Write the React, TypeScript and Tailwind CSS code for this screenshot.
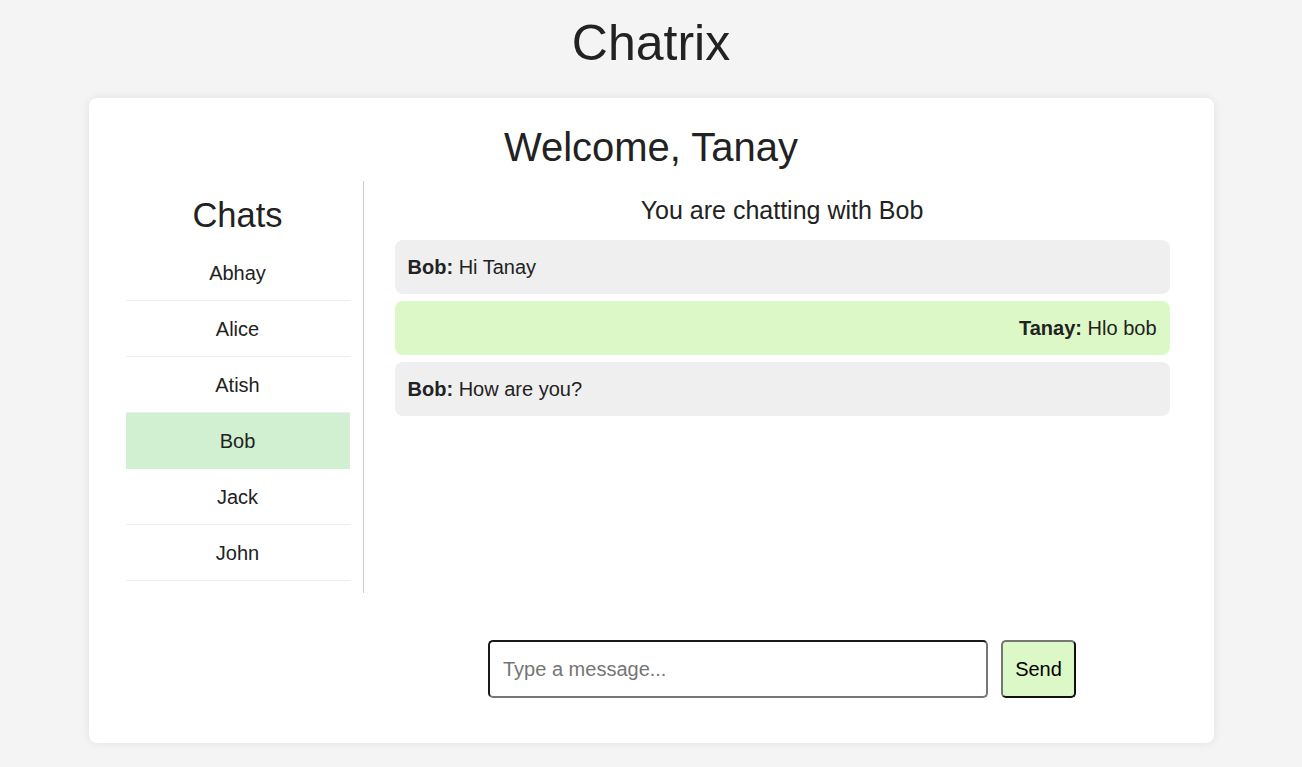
const chats = ["Abhay", "Alice", "Atish", "Bob", "Jack", "John"];

const messages = [
  { from: "Bob", text: "Hi Tanay", mine: false },
  { from: "Tanay", text: "Hlo bob", mine: true },
  { from: "Bob", text: "How are you?", mine: false },
];

export default function App() {
  return (
    <div className="min-h-screen bg-[#f4f4f4] pt-[14px] pb-6 text-[#222] font-['Liberation_Sans',Arial,sans-serif]">
      <h1 className="text-center text-[50px] leading-[58px] font-normal">Chatrix</h1>

      <div className="mx-auto mt-[26px] w-[1125px] rounded-lg bg-white px-[37px] pt-[27px] pb-[45px] shadow-[0_0_10px_rgba(0,0,0,0.08)]">
        <h2 className="text-center text-[40px] leading-[45px] mb-[11px]">Welcome, Tanay</h2>

        <div className="flex items-start">
          {/* sidebar */}
          <div className="w-[238px] shrink-0 border-r border-[#ccc] pr-[13px] pb-[12px]">
            <h3 className="text-center text-[34.5px] leading-[40px] mt-[14px] mb-[10px]">Chats</h3>
            <ul>
              {chats.map((c) => (
                <li
                  key={c}
                  className={
                    c === "Bob"
                      ? "h-[56px] flex items-center justify-center text-[20px] bg-[#d1f0d1] border-b border-[#d1f0d1]"
                      : "h-[56px] flex items-center justify-center text-[20px] border-b border-[#eee]"
                  }
                >
                  {c}
                </li>
              ))}
            </ul>
          </div>

          {/* chat area */}
          <div className="flex-1 pl-[31px] pr-[7px]">
            <h3 className="text-center text-[25px] leading-[28px] mt-[15px] mb-[16px]">You are chatting with Bob</h3>
            <div className="h-[380px] flex flex-col gap-[7px]">
              {messages.map((m, i) => (
                <div
                  key={i}
                  className={
                    m.mine
                      ? "h-[54px] flex items-center justify-end rounded-lg bg-[#dcf8c6] px-[13px] text-[20px]"
                      : "h-[54px] flex items-center rounded-lg bg-[#efefef] px-[13px] text-[20px]"
                  }
                >
                  <span>
                    <b>{m.from}:</b> {m.text}
                  </span>
                </div>
              ))}
            </div>
            <div className="mt-[20px] flex justify-center gap-[13px]">
              <input
                placeholder="Type a message..."
                className="w-[500px] h-[58px] rounded-[5px] border-2 border-t-[#1a1a1a] border-l-[#1a1a1a] border-r-[#767676] border-b-[#767676] px-[13px] text-[20px] outline-none placeholder:text-[#757575]"
              />
              <button className="w-[75px] h-[58px] rounded-[5px] border-2 border-t-[#767676] border-l-[#767676] border-r-[#111] border-b-[#111] bg-[#dcf8c6] text-[20px] text-black">
                Send
              </button>
            </div>
          </div>
        </div>
      </div>
    </div>
  );
}
